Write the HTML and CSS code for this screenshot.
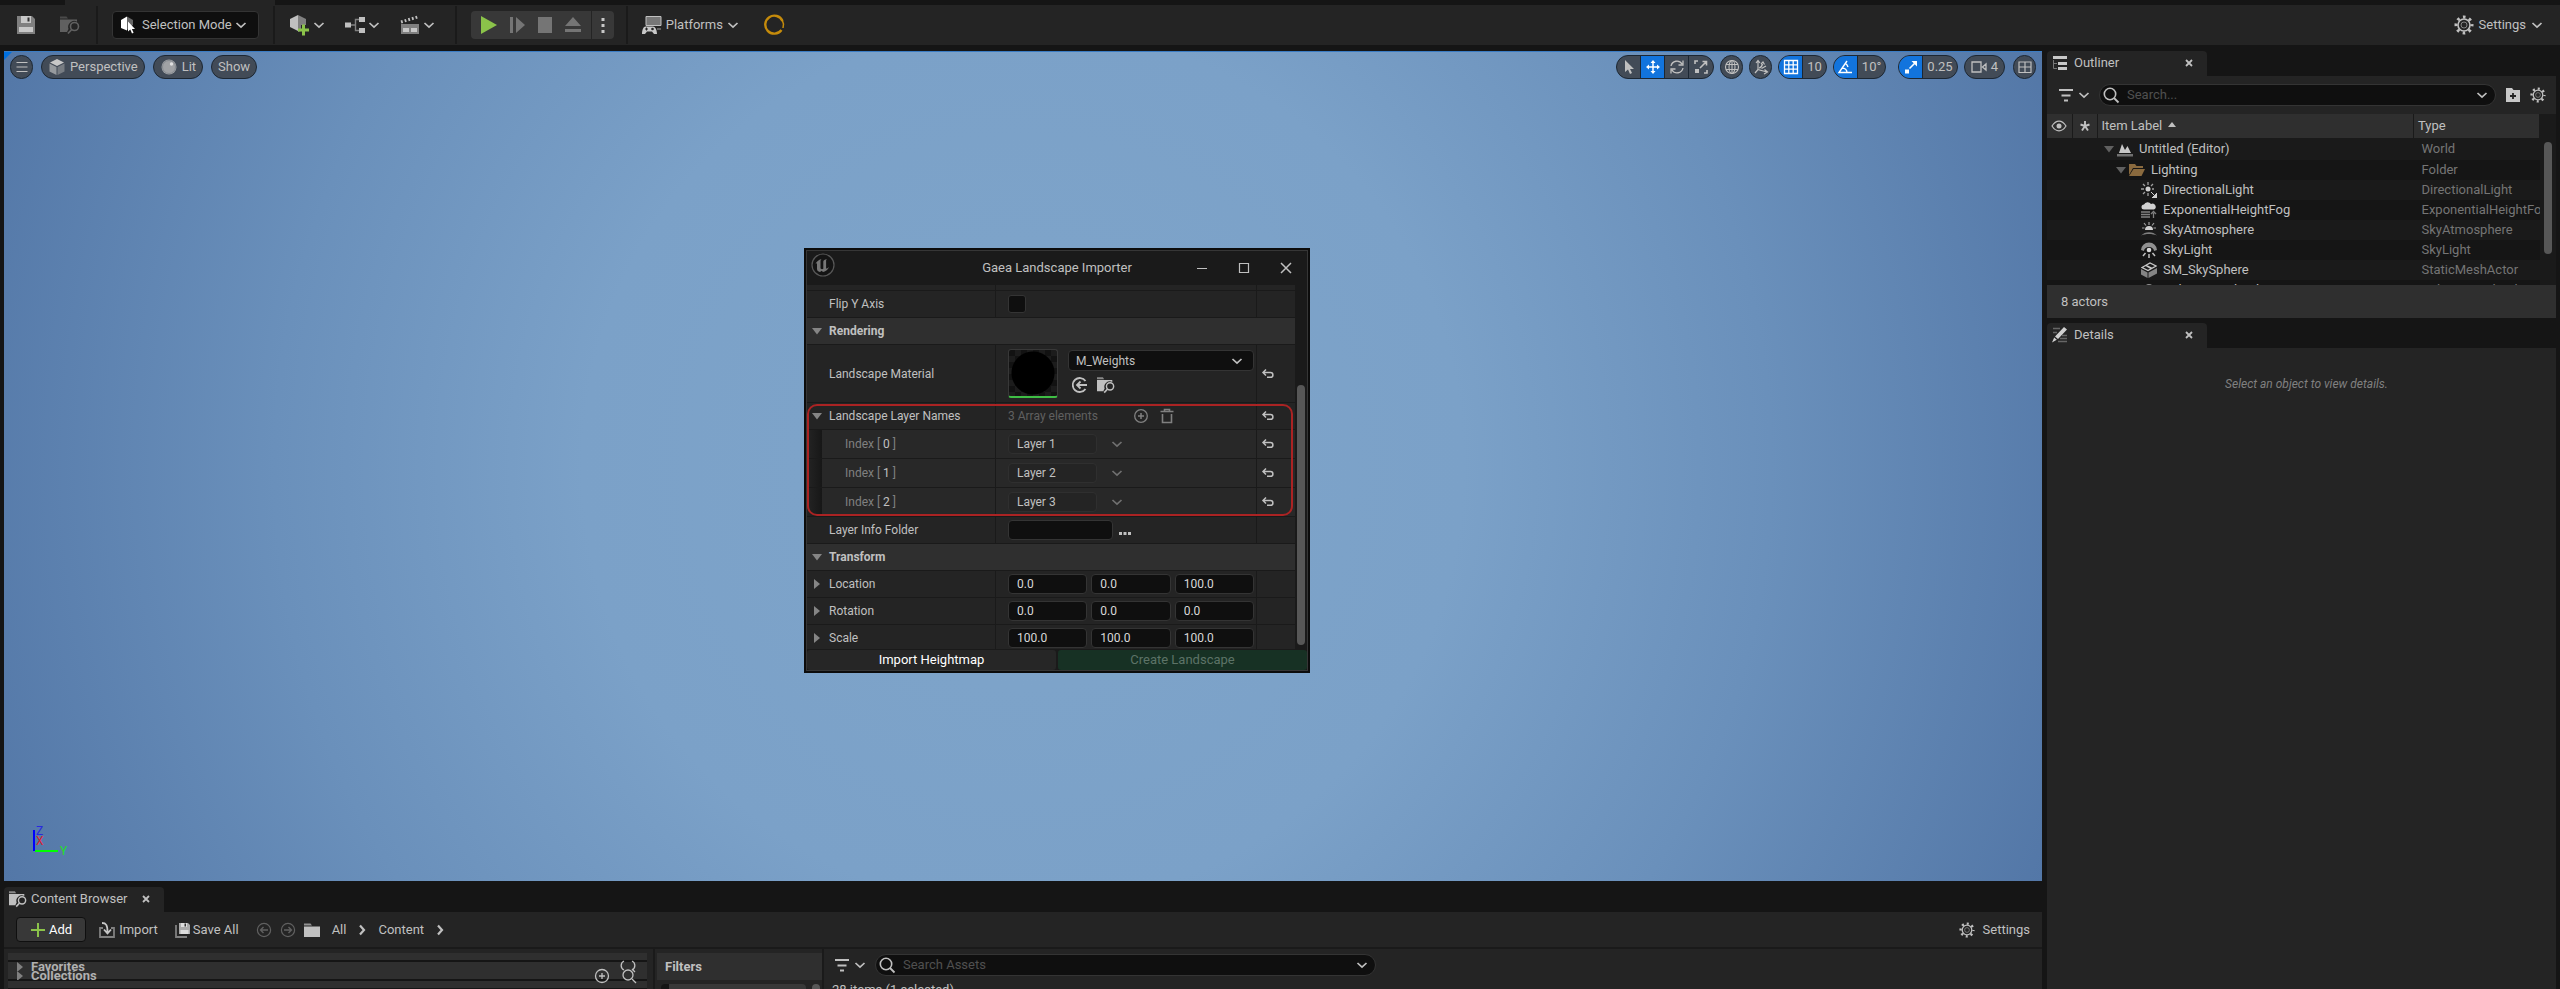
FILE: index.html
```html
<!DOCTYPE html>
<html lang="en">
<head>
<meta charset="utf-8">
<title>Unreal Editor</title>
<link rel="stylesheet" href="styles.css">
</head>
<body>
<svg class="defs" aria-hidden="true">
  <symbol id="chev" viewBox="0 0 12 12"><path d="M1.5 4l4.5 4.2L10.500 4" fill="none" stroke="currentColor" stroke-width="1.7"/></symbol>
  <symbol id="chevr" viewBox="0 0 12 12"><path d="M4 1.500l4 4.500-4 4.500" fill="none" stroke="currentColor" stroke-width="2.200"/></symbol>
  <symbol id="close" viewBox="0 0 12 12"><path d="M3 3l6 6M9 3l-6 6" stroke="currentColor" stroke-width="1.800"/></symbol>
  <symbol id="down" viewBox="0 0 12 12"><path d="M1 3h10L6 9.500z" fill="currentColor"/></symbol>
  <symbol id="right" viewBox="0 0 12 12"><path d="M3 1v10l6-5z" fill="currentColor"/></symbol>
  <symbol id="save" viewBox="0 0 20 20"><path d="M1 1h15l3 3v15H1z" fill="#808080"/><path d="M5 1h10v7H5zM3 12h14v5H3z" fill="#c8c8c8"/><path d="M11.500 2.500h2v4h-2z" fill="#333"/></symbol>
  <symbol id="foldersearch" viewBox="0 0 20 20"><path d="M0 1.500h6.500L8 3.500H0z" fill="currentColor" opacity=".65"/><path d="M0 4.500h17v2.200A6 6 0 0 0 8.500 14L7 17H0z" fill="currentColor"/><circle cx="14.500" cy="11.500" r="4" fill="none" stroke="currentColor" stroke-width="1.600"/><path d="M11.700 14.500L8 18.500" stroke="currentColor" stroke-width="1.800"/></symbol>
  <symbol id="folder" viewBox="0 0 20 20"><path d="M2 3.500h6.500L10 5.500H2z" fill="currentColor" opacity=".7"/><path d="M2 6.500h16V17H2z" fill="currentColor"/></symbol>
  <symbol id="modecube" viewBox="0 0 20 20"><path d="M3 5l6-3.500v14L3 13z" fill="#fff"/><path d="M9 1.500L15 5v5L9 15z" fill="#666"/><path d="M10 6.500v10l2.300-2 1.700 4 1.600-.8-1.700-3.700h3.100z" fill="#fff"/></symbol>
  <symbol id="addcube" viewBox="0 0 22 22"><path d="M2 5l8-4v16l-8-4z" fill="#c0c0c0"/><path d="M10 1l8 4v6h-5v6l-3 1z" fill="#808080"/><path d="M15.500 10.500v11M10 16h11" stroke="#8bc34a" stroke-width="3"/></symbol>
  <symbol id="nodes" viewBox="0 0 20 20"><path d="M4 10h6M15 4.500h-4.500v11H15" fill="none" stroke="#808080" stroke-width="1.400"/><path d="M0 7.500h6v5H0zM14 2h6v5h-6zM14 13h6v5h-6z" fill="#c0c0c0"/></symbol>
  <symbol id="clap" viewBox="0 0 20 20"><path d="M1 7L17.500 2" stroke="#c0c0c0" stroke-width="3" stroke-dasharray="1.800 2"/><path d="M1 9h18v10H1z" fill="#808080"/><path d="M3 13h6v4H3zM11 13h6v4h-6z" fill="#c8c8c8"/></symbol>
  <symbol id="platforms" viewBox="0 0 20 20"><path d="M4 1.500h15v9H4z" fill="#777" stroke="#c0c0c0"/><path d="M3.500 11.500h7.500c2 0 4 3 4 7.500h-3l-2-2.500H5L3 19H0c0-4 1.500-7.500 3.500-7.500z" fill="#c8c8c8"/><path d="M3 14h3M4.500 12.500v3" stroke="#242424"/><circle cx="10.500" cy="14" r="1.300" fill="#242424"/><path d="M15 14h4" stroke="#777" stroke-width="1.500"/></symbol>
  <symbol id="gear" viewBox="0 0 20 20"><circle cx="10" cy="10" r="8" fill="none" stroke="currentColor" stroke-width="3" stroke-dasharray="2.600 3.683" stroke-dashoffset="1.300"/><circle cx="10" cy="10" r="6" fill="none" stroke="currentColor" stroke-width="1.600"/><circle cx="10" cy="10" r="3" fill="none" stroke="currentColor" opacity=".6"/></symbol>
  <symbol id="search" viewBox="0 0 20 20"><circle cx="9" cy="9" r="5.700" fill="none" stroke="currentColor" stroke-width="1.600"/><path d="M13 13l4.500 4.500" stroke="currentColor" stroke-width="1.800"/></symbol>
  <symbol id="filter" viewBox="0 0 20 20"><path d="M3 5h14M5.500 10.500h9M8 15.500h4" stroke="currentColor" stroke-width="2"/></symbol>
  <symbol id="reset" viewBox="0 0 14 14"><path d="M5 2.500L2 5.500l3 3M2.500 5.500H9.500a2.400 2.400 0 0 1 0 4.800H6" fill="none" stroke="currentColor" stroke-width="1.500"/></symbol>
  <symbol id="pluscircle" viewBox="0 0 16 16"><circle cx="8" cy="8" r="6.300" fill="none" stroke="currentColor" stroke-width="1.300"/><path d="M8 5v6M5 8h6" stroke="currentColor" stroke-width="1.500"/></symbol>
  <symbol id="arrowcircle" viewBox="0 0 16 16"><circle cx="8" cy="8" r="6.600" fill="none" stroke="currentColor" stroke-width="1.200"/><path d="M12 8H4.500M7.500 5l-3 3 3 3" fill="none" stroke="currentColor" stroke-width="1.400"/></symbol>
</svg>

<div class="topstrip"><div class="topstrip-tab"></div></div>
<header class="toolbar">
  <button class="tb save" aria-label="Save"><svg class="i20"><use href="#save"/></svg></button>
  <button class="tb browse" aria-label="Browse"><svg class="i20"><use href="#foldersearch"/></svg></button>
  <i class="sep"></i>
  <button class="mode"><svg class="i20"><use href="#modecube"/></svg>Selection Mode<svg class="i12"><use href="#chev"/></svg></button>
  <i class="sep"></i>
  <div class="group">
    <button class="tb" aria-label="Add actor"><svg class="i22"><use href="#addcube"/></svg><svg class="i12"><use href="#chev"/></svg></button>
    <button class="tb" aria-label="Blueprints"><svg class="i20"><use href="#nodes"/></svg><svg class="i12"><use href="#chev"/></svg></button>
    <button class="tb" aria-label="Cinematics"><svg class="i20"><use href="#clap"/></svg><svg class="i12"><use href="#chev"/></svg></button>
  </div>
  <i class="sep"></i>
  <div class="play">
    <button class="tb" aria-label="Play"><svg class="i20"><path d="M2 1l16 9-16 9z" fill="#8bc34a"/></svg></button>
    <button class="tb" aria-label="Step"><svg class="i20"><path d="M3 2h3v16H3zM9 2l9 8-9 8z" fill="#757575"/></svg></button>
    <button class="tb" aria-label="Stop"><svg class="i20"><path d="M3 2h14v16H3z" fill="#757575"/></svg></button>
    <button class="tb" aria-label="Eject"><svg class="i20"><path d="M10 2l8 9H2zM2 14h16v3H2z" fill="#757575"/></svg></button>
    <button class="tb more" aria-label="Play options"><svg class="i20"><path d="M8.500 3h3v3h-3zM8.500 9h3v3h-3zM8.500 15h3v3h-3z" fill="#c8c8c8"/></svg></button>
  </div>
  <i class="sep"></i>
  <button class="tb platforms"><svg class="i20"><use href="#platforms"/></svg>Platforms<svg class="i12"><use href="#chev"/></svg></button>
  <svg class="i22 ring" viewBox="0 0 22 22"><path d="M19.500 7A9 9 0 1 0 18.500 16" fill="none" stroke="#c58b0b" stroke-width="2.400"/><path d="M19 5.500l1.500 4.500-.5 4" fill="none" stroke="#c58b0b" stroke-width="1.500"/></svg>
  <button class="tb settings"><svg class="i20"><use href="#gear"/></svg>Settings<svg class="i12"><use href="#chev"/></svg></button>
</header>

<div class="workspace">
  <div class="left">
    <main class="viewport">
      <div class="corner"></div>
      <div class="vbar">
        <button class="pill round" aria-label="Viewport options"><svg class="i14" viewBox="0 0 14 14"><path d="M1.500 2.500h11M1.500 7h11M1.500 11.500h11" stroke="currentColor" stroke-width="1.200"/></svg></button>
        <button class="pill text"><svg class="i18" viewBox="0 0 18 18"><path d="M9 1l7 3.500L9 8 2 4.500z" fill="#c8c8c8"/><path d="M1.500 5.500L8.500 9v8l-7-3.500z" fill="#969a9e"/><path d="M16.500 5.500L9.500 9v8l7-3.500z" fill="#777c82"/></svg>Perspective</button>
        <button class="pill text"><svg class="i18" viewBox="0 0 18 18"><circle cx="9" cy="9" r="7.500" fill="#a0a2a5"/><circle cx="9" cy="9" r="6.500" fill="none" stroke="#858a90"/><circle cx="11.500" cy="6" r="1.700" fill="#e0e0e0"/></svg>Lit</button>
        <button class="pill text">Show</button>
        <div class="pill multi first">
          <button aria-label="Select"><svg class="i16" viewBox="0 0 16 16"><path d="M4 1v12l3-2.500 2 4.500 2-1-2-4h4z" fill="currentColor"/></svg></button>
          <button class="on" aria-label="Move"><svg class="i16" viewBox="0 0 16 16"><path d="M8 2v12M2 8h12" stroke="currentColor" stroke-width="1.500"/><path d="M8 1l2.500 3h-5zM8 15l2.500-3h-5zM1 8l3-2.500v5zM15 8l-3-2.500v5z" fill="currentColor"/></svg></button>
          <button aria-label="Rotate"><svg class="i16" viewBox="0 0 16 16"><path d="M2 7a6 6 0 0 1 11-2M14 9a6 6 0 0 1-11 2M14 1.500V6H9.500M2 14.500V10h4.500" fill="none" stroke="currentColor" stroke-width="1.300"/></svg></button>
          <button aria-label="Scale"><svg class="i16" viewBox="0 0 16 16"><path d="M2 5V2h3M14 11v3h-3M7 9l6-6M9.500 2.500h4v4" fill="none" stroke="currentColor" stroke-width="1.600"/><path d="M2 10h4v4H2z" fill="currentColor"/></svg></button>
        </div>
        <button class="pill round" aria-label="World space"><svg class="i16" viewBox="0 0 16 16"><g fill="none" stroke="currentColor" stroke-width="1.100"><circle cx="8" cy="8" r="6.500"/><ellipse cx="8" cy="8" rx="3" ry="6.500"/><path d="M8 1.500v13M2 5.500h12M2 10.500h12"/></g></svg></button>
        <button class="pill round" aria-label="Surface snapping"><svg class="i16" viewBox="0 0 16 16"><path d="M5 2v8.500l9 2.500M3 4l2-2.500L7 4M5 10.500L2 14M11.500 10.500L14.500 13l-3.500 2M6 9c2-.5 3-2 3.500-4M8 5l2-2 1.500 2.500M8.500 9.500L13 7" fill="none" stroke="currentColor" stroke-width="1.200"/></svg></button>
        <div class="pill multi">
          <button class="on" aria-label="Grid snap"><svg class="i16" viewBox="0 0 16 16"><path d="M1.500 1.500h13v13h-13zM1.500 5.800h13M1.500 10.200h13M5.800 1.500v13M10.200 1.500v13" fill="none" stroke="currentColor" stroke-width="1.300"/></svg></button>
          <button class="val">10</button>
        </div>
        <div class="pill multi">
          <button class="on" aria-label="Angle snap"><svg class="i16" viewBox="0 0 16 16"><path d="M10 2L2 13.500h13M5 9c3 0 5 2 5 4.500M8.500 4.500c1.500 1 2 2 2.500 3.500" fill="none" stroke="currentColor" stroke-width="1.400"/></svg></button>
          <button class="val">10°</button>
        </div>
        <div class="pill multi apart">
          <button class="on" aria-label="Scale snap"><svg class="i16" viewBox="0 0 16 16"><path d="M6.500 9.500L12 4" stroke="currentColor" stroke-width="1.600"/><path d="M8.500 2H14v5.500zM2 10.500h4v4H2z" fill="currentColor"/></svg></button>
          <button class="val">0.25</button>
        </div>
        <button class="pill text cam"><svg class="i16" viewBox="0 0 16 16"><path d="M1 3h9v10H1zM11.500 8L15 5v6z" fill="none" stroke="currentColor" stroke-width="1.300"/></svg>4</button>
        <button class="pill round" aria-label="Layout"><svg class="i16" viewBox="0 0 16 16"><path d="M2 3h12v10.500H2zM8 3v10.500M2 8h12" fill="none" stroke="currentColor" stroke-width="1.200"/></svg></button>
      </div>

      <svg class="axes" viewBox="0 0 44 40"><path d="M2 9v21" stroke="#00f" stroke-width="2"/><path d="M3 30h23" stroke="#0f0" stroke-width="2"/><text x="4" y="14" fill="#2929e0">Z</text><text x="4" y="24" fill="#e01c30">X</text><text x="28" y="34" fill="#1fe01f">Y</text></svg>

      <section class="dialog" aria-label="Gaea Landscape Importer">
        <div class="titlebar">
          <svg class="i24" viewBox="0 0 24 24"><circle cx="12" cy="12" r="11" fill="#141414" stroke="#585858" stroke-width="1.200"/><path d="M4.500 11c1-2.500 3-4 6-5-1 1-1 1.500-1 3v6c0 1 1.500 1.500 2.800.8V8.500c0-1 1.500-2 3.700-2.500-.8.800-.9 1.300-.9 2v7.500c.9.200 2-.5 2.900-1.500-1 3-4 4.500-6 5l-1.300-1.300L9 19c-2-.5-3-1.500-3-3v-5c0-1-.7-.8-1.500 0z" fill="#777"/></svg>
          <h1>Gaea Landscape Importer</h1>
          <div class="winbtns">
            <button aria-label="Minimize"><svg class="i14" viewBox="0 0 14 14"><path d="M2 7.500h10" stroke="currentColor" stroke-width="1"/></svg></button>
            <button aria-label="Maximize"><svg class="i14" viewBox="0 0 14 14"><path d="M2.500 2.500h9v9h-9z" fill="none" stroke="currentColor" stroke-width="1.200"/></svg></button>
            <button aria-label="Close"><svg class="i14" viewBox="0 0 14 14"><path d="M2 2l10 10M12 2L2 12" stroke="currentColor" stroke-width="1.500"/></svg></button>
          </div>
        </div>
        <div class="body">
          <div class="props">
            <div class="row stub"><span class="name"></span><span class="value"></span><span class="end"></span></div>
            <div class="row"><label class="name" for="flip">Flip Y Axis</label><span class="value"><input type="checkbox" id="flip"></span><span class="end"></span></div>
            <h2 class="cat"><svg class="i12"><use href="#down"/></svg>Rendering</h2>
            <div class="row tall">
              <label class="name" for="mat">Landscape Material</label>
              <span class="value material"><span class="thumb"></span>
                <span class="asset">
                  <span class="pick"><select id="mat"><option>M_Weights</option></select><svg class="i12"><use href="#chev"/></svg></span>
                  <span class="assetbtns"><button aria-label="Use selected"><svg class="i16" viewBox="0 0 16 16"><path d="M13.500 4A7 7 0 1 0 13.500 12M15 8H5M8.500 4.500L5 8l3.500 3.500" fill="none" stroke="currentColor" stroke-width="1.800"/></svg></button><button aria-label="Browse to asset"><svg class="i18"><use href="#foldersearch"/></svg></button></span>
                </span></span>
              <span class="end"><button aria-label="Reset"><svg class="i14"><use href="#reset"/></svg></button></span>
            </div>
            <div class="layers">
              <div class="row"><span class="name"><svg class="i12 tri"><use href="#down"/></svg>Landscape Layer Names</span><span class="value array">3 Array elements<button class="addel" aria-label="Add element"><svg class="i16"><use href="#pluscircle"/></svg></button><button aria-label="Remove all"><svg class="i16" viewBox="0 0 16 16"><path d="M1.500 3.500h13M5.500 3V1.500h5V3M3.500 6v8.500h9V6" fill="none" stroke="currentColor" stroke-width="1.600"/></svg></button></span><span class="end"><button aria-label="Reset"><svg class="i14"><use href="#reset"/></svg></button></span></div>
              <div class="row index"><label class="name" for="l0">Index [ <b>0</b> ]</label><span class="value"><input class="field layer" id="l0" value="Layer 1"><svg class="i12"><use href="#chev"/></svg></span><span class="end"><button aria-label="Reset"><svg class="i14"><use href="#reset"/></svg></button></span></div>
              <div class="row index"><label class="name" for="l1">Index [ <b>1</b> ]</label><span class="value"><input class="field layer" id="l1" value="Layer 2"><svg class="i12"><use href="#chev"/></svg></span><span class="end"><button aria-label="Reset"><svg class="i14"><use href="#reset"/></svg></button></span></div>
              <div class="row index"><label class="name" for="l2">Index [ <b>2</b> ]</label><span class="value"><input class="field layer" id="l2" value="Layer 3"><svg class="i12"><use href="#chev"/></svg></span><span class="end"><button aria-label="Reset"><svg class="i14"><use href="#reset"/></svg></button></span></div>
            </div>
            <div class="row"><label class="name" for="info">Layer Info Folder</label><span class="value"><input class="field info" id="info"><button class="dots" aria-label="Choose folder"><svg class="i12" viewBox="0 0 12 12"><path d="M0 8h3v3H0zM4.500 8h3v3h-3zM9 8h3v3H9z" fill="currentColor"/></svg></button></span><span class="end"></span></div>
            <h2 class="cat"><svg class="i12"><use href="#down"/></svg>Transform</h2>
            <div class="row"><span class="name"><svg class="i12 tri"><use href="#right"/></svg>Location</span><span class="value vec"><input class="field" aria-label="Location X" value="0.0"><input class="field" aria-label="Location Y" value="0.0"><input class="field" aria-label="Location Z" value="100.0"></span><span class="end"></span></div>
            <div class="row"><span class="name"><svg class="i12 tri"><use href="#right"/></svg>Rotation</span><span class="value vec"><input class="field" aria-label="Rotation X" value="0.0"><input class="field" aria-label="Rotation Y" value="0.0"><input class="field" aria-label="Rotation Z" value="0.0"></span><span class="end"></span></div>
            <div class="row"><span class="name"><svg class="i12 tri"><use href="#right"/></svg>Scale</span><span class="value vec"><input class="field" aria-label="Scale X" value="100.0"><input class="field" aria-label="Scale Y" value="100.0"><input class="field" aria-label="Scale Z" value="100.0"></span><span class="end"></span></div>
          </div>
          <div class="track"><div class="thumbbar"></div></div>
        </div>
        <div class="actions"><button>Import Heightmap</button><button class="create" disabled>Create Landscape</button></div>
      </section>
    </main>

    <section class="browser">
      <div class="tab tight"><svg class="i18"><use href="#foldersearch"/></svg><span>Content Browser</span><button aria-label="Close tab"><svg class="i12"><use href="#close"/></svg></button></div>
      <div class="cbbar">
        <button class="add"><svg class="i14" viewBox="0 0 14 14"><path d="M7 0v14M0 7h14" stroke="#8bc34a" stroke-width="2"/></svg>Add</button>
        <button class="tb import"><svg class="i18" viewBox="0 0 18 18"><path d="M5 7H2v9h14V7h-3" fill="none" stroke="#808080" stroke-width="1.800"/><path d="M4 2c4 0 5.500 2 5.500 9M6 8.500l3.500 4 3.500-4" fill="none" stroke="#c8c8c8" stroke-width="1.800"/></svg>Import</button>
        <button class="tb saveall"><svg class="i16" viewBox="0 0 16 16"><path d="M1 3v12h11" fill="none" stroke="#808080" stroke-width="1.800"/><path d="M4 1h9l2 2v9H4z" fill="#aaa"/><path d="M6 1h6v4H6zM5.500 8h8v4h-8z" fill="#ddd"/><path d="M9.500 1.500h1.500v3H9.500z" fill="#333"/></svg>Save All</button>
        <button class="tb back" aria-label="Back"><svg class="i16"><use href="#arrowcircle"/></svg></button>
        <button class="tb fwd" aria-label="Forward"><svg class="i16"><use href="#arrowcircle"/></svg></button>
        <nav class="crumbs"><svg class="i20"><use href="#folder"/></svg><a href="#">All</a><svg class="i12"><use href="#chevr"/></svg><a href="#">Content</a><svg class="i12"><use href="#chevr"/></svg></nav>
        <button class="tb cbset"><svg class="i16"><use href="#gear"/></svg>Settings</button>
      </div>
      <div class="panes">
        <div class="sources">
          <div class="bar cap"></div>
          <div class="bar trees">
            <div class="tree"><svg class="i12"><use href="#right"/></svg><b>Favorites</b></div>
            <div class="tree"><svg class="i12"><use href="#right"/></svg><b>Collections</b></div>
          </div>
          <div class="bar cap"></div>
          <svg class="srcicons" viewBox="0 0 44 26"><g fill="none" stroke="#c0c0c0" stroke-width="1.300"><circle cx="9" cy="17" r="6.500"/><path d="M9 14v6M6 17h6"/><path d="M31 2a5 5 0 0 0 0 9M39 2a5 5 0 0 1 0 9M39 10l3 3"/><circle cx="35" cy="16" r="5"/><path d="M39 20l4 4"/></g></svg>
        </div>
        <div class="filters"><h2>Filters</h2><div class="filterbody"><span></span><i></i></div></div>
        <div class="assets">
          <div class="searchrow"><button class="tb" aria-label="Filter"><svg class="i20"><use href="#filter"/></svg><svg class="i12"><use href="#chev"/></svg></button>
            <div class="searchbox"><svg class="i20"><use href="#search"/></svg><input aria-label="Search Assets" placeholder="Search Assets"><svg class="i12"><use href="#chev"/></svg></div></div>
          <div class="count">28 items (1 selected)</div>
        </div>
      </div>
    </section>
  </div>

  <aside class="right">
    <section class="outliner">
      <div class="tab"><svg class="i16" viewBox="0 0 16 16"><path d="M1 1h14v3H1zM6 7h9v3H6zM6 12h9v3H6z" fill="#c8c8c8"/><path d="M1.500 5v8.500H5M1.500 8.500H5" fill="none" stroke="#777"/></svg><span>Outliner</span><button aria-label="Close tab"><svg class="i12"><use href="#close"/></svg></button></div>
      <div class="outbar"><button class="tb" aria-label="Filter"><svg class="i20"><use href="#filter"/></svg><svg class="i12"><use href="#chev"/></svg></button>
        <div class="searchbox"><svg class="i20"><use href="#search"/></svg><input aria-label="Search" placeholder="Search..."><svg class="i12"><use href="#chev"/></svg></div>
        <button class="tb" aria-label="New folder"><svg class="i16" viewBox="0 0 16 16"><path d="M1 1h6l1.500 2H15v12H1z" fill="#c8c8c8"/><path d="M8 6v6M5 9h6" stroke="#242424" stroke-width="1.800"/></svg></button>
        <button class="tb" aria-label="Outliner settings"><svg class="i16"><use href="#gear"/></svg></button></div>
      <div class="outscroll">
        <table>
          <colgroup><col class="c1"><col class="c1"><col><col class="c4"></colgroup>
          <thead><tr><th><svg class="i16" viewBox="0 0 16 16"><path d="M1 8c4-6.500 10-6.500 14 0-4 6.500-10 6.500-14 0z" fill="none" stroke="#c0c0c0" stroke-width="1.200"/><circle cx="8" cy="8" r="2.500" fill="#c0c0c0"/></svg></th><th><svg class="i12" viewBox="0 0 12 12"><path d="M6 1v5M6 6L1.500 4.500M6 6l4.500-1.500M6 6l-3 4.500M6 6l3 4.500" stroke="#c0c0c0" stroke-width="1.900"/></svg></th><th class="lab">Item Label<svg class="i12" viewBox="0 0 12 12"><path d="M2 9h8L6 4z" fill="#c0c0c0"/></svg></th><th class="lab">Type</th></tr></thead>
          <tbody>
            <tr class="root"><td></td><td></td><td><span class="item"><svg class="i12 dim"><use href="#down"/></svg><svg class="i16" viewBox="0 0 16 16"><path d="M2 12l3-9 3 6 2.500-4L14 12z" fill="#c8c8c8"/><path d="M0 13h16v2.500H0z" fill="#707070"/></svg>Untitled (Editor)</span></td><td>World</td></tr>
            <tr><td></td><td></td><td><span class="item d1"><svg class="i12 dim"><use href="#down"/></svg><svg class="i16" viewBox="0 0 16 16"><path d="M0 2h6l1.500 2H14v2H4L0 13z" fill="#8a6a3e"/><path d="M4.500 7H16l-3.500 7H0z" fill="#8a6a3e"/></svg>Lighting</span></td><td>Folder</td></tr>
            <tr><td></td><td></td><td><span class="item d2"><svg class="i16" viewBox="0 0 16 16"><circle cx="7" cy="7" r="2.500" fill="#d0d0d0"/><path d="M7 0v3M7 11v3M0 7h3M11 7h2M2 2l2 2M12 2l-2 2M2 12l2-2" stroke="#a0a0a0" stroke-width="1.300"/><path d="M10 10l3 3M16 11v5h-5z" fill="#d0d0d0" stroke="#d0d0d0"/></svg>DirectionalLight</span></td><td>DirectionalLight</td></tr>
            <tr><td></td><td></td><td><span class="item d2"><svg class="i16" viewBox="0 0 16 16"><path d="M3 7.500a2.500 2.500 0 0 1 0-5 4 4 0 0 1 7-.5 2.800 2.800 0 0 1 3 5.500z" fill="#d0d0d0"/><path d="M0 10h9M0 12.500h9M0 15h9M12.500 16v-5M10 12l2.500-2.500L15 12" fill="none" stroke="#808080" stroke-width="1.300"/></svg>ExponentialHeightFog</span></td><td>ExponentialHeightFog</td></tr>
            <tr><td></td><td></td><td><span class="item d2"><svg class="i16" viewBox="0 0 16 16"><path d="M4 8a4 4 0 0 1 8 0z" fill="#d0d0d0"/><path d="M8 0v3M3 1l2 2.500M13 1l-2 2.500M1 6h2.500M12.500 6H15" stroke="#a0a0a0" stroke-width="1.200"/><path d="M0 13.500c4-4.500 12-4.500 16 0-5-2-11-2-16 0z" fill="#808080"/></svg>SkyAtmosphere</span></td><td>SkyAtmosphere</td></tr>
            <tr><td></td><td></td><td><span class="item d2"><svg class="i16" viewBox="0 0 16 16"><path d="M0 8a8 7.500 0 0 1 16 0l-3 1a5 4 0 0 0-10 0z" fill="#909090"/><circle cx="8" cy="8" r="2.300" fill="#d8d8d8"/><path d="M8 12v4M4.500 11l-2.500 3M11.500 11l2.500 3" stroke="#c0c0c0" stroke-width="1.500"/></svg>SkyLight</span></td><td>SkyLight</td></tr>
            <tr><td></td><td></td><td><span class="item d2"><svg class="i16" viewBox="0 0 16 16"><path d="M1 5.500L9 1l6 3-8 4.500zM5 3.300l6 3M9 5.800L5.500 4" fill="none" stroke="#c8c8c8" stroke-width="1.300"/><path d="M0 7l6.500 3.500V16L0 12.500zM7.500 10.500L16 6v5.500L7.500 16z" fill="#858585"/></svg>SM_SkySphere</span></td><td>StaticMeshActor</td></tr>
            <tr><td></td><td></td><td><span class="item d2"><svg class="i16" viewBox="0 0 16 16"><path d="M3 7a5 5 0 0 1 10 0v4H3z" fill="#909090"/></svg>VolumetricCloud</span></td><td>VolumetricCloud</td></tr>
          </tbody>
        </table>
        <div class="track"><div class="thumbbar"></div></div>
      </div>
      <div class="status">8 actors</div>
    </section>
    <section class="details">
      <div class="tab"><svg class="i16" viewBox="0 0 16 16"><path d="M1 1.500h7M1 5.500h4M10 8.500h5M8 11.500h7M6 14.500h9" stroke="#666" stroke-width="1.300"/><path d="M12 0l3 2.500L6 12l-3-2.500zM2.200 10.500l2.600 2.300L0 15.500z" fill="#d0d0d0"/></svg><span>Details</span><button aria-label="Close tab"><svg class="i12"><use href="#close"/></svg></button></div>
      <div class="detailbody">Select an object to view details.</div>
    </section>
  </aside>
</div>
</body>
</html>
```
FILE: styles.css
```css
* { box-sizing: border-box; }
html, body { height: 100%; }
body {
  margin: 0; background: #151515; color: #c0c0c0;
  font: 13px/16px Roboto, "Liberation Sans", sans-serif;
  display: flex; flex-direction: column; overflow: hidden;
}
button, input, select { font: inherit; color: inherit; background: none; border: 0; padding: 0; margin: 0; border-radius: 0; }
button { display: flex; align-items: center; }
svg { display: block; flex: none; }
h1, h2 { margin: 0; font-size: 13px; }
a { color: inherit; text-decoration: none; }
.defs { position: absolute; width: 0; height: 0; }
.i12 { width: 12px; height: 12px; }
.i14 { width: 14px; height: 14px; }
.i16 { width: 16px; height: 16px; }
.i18 { width: 18px; height: 18px; }
.i20 { width: 20px; height: 20px; }
.i22 { width: 22px; height: 22px; }
.i24 { width: 24px; height: 24px; }

.topstrip { height: 5px; padding-left: 65px; }
.topstrip-tab { width: 210px; height: 5px; background: #242424; }
.toolbar { height: 40px; flex: none; background: #242424; display: flex; align-items: center; padding: 0 17px 0 16px; }
.sep { width: 2px; height: 38px; background: #1a1a1a; flex: none; }
.browse { margin: 0 16px 0 24px; color: #606060; }
.mode { height: 28px; margin: 0 14px; padding: 0 11px 0 5px; background: #0f0f0f; border: 1px solid #343434; border-radius: 4px; }
.mode .i20 { margin-right: 4px; }
.mode .i12 { margin-left: 3px; }
.group { display: flex; gap: 20px; margin: 0 20px 0 13px; }
.group .tb { gap: 3px; }
.play { height: 28px; display: flex; margin: 0 12px 0 14px; padding-left: 8px; gap: 8px; background: #383838; border-radius: 4px; }
.play .more { width: 23px; border-left: 1px solid #242424; justify-content: center; }
.platforms { margin-left: 14px; gap: 4px; }
.ring { margin-left: 24px; }
.settings { margin-left: auto; gap: 5px; }

.workspace { flex: 1; min-height: 0; display: flex; gap: 5px; padding: 6px 4px 0; }
.left { flex: 1; min-width: 0; display: flex; flex-direction: column; gap: 6px; }
.right { width: 509px; flex: none; display: flex; flex-direction: column; gap: 5px; }

.viewport { flex: 1; position: relative; border-top: 1px solid #3a7cc4; background: radial-gradient(circle farthest-corner at 50% 50%, #7fa5ca 0%, #7ba1c8 40%, #6a90bb 68%, #5377a7 100%); }
.corner { position: absolute; left: 0; top: 0; border-top: 8px solid #0070e0; border-right: 8px solid transparent; }
.vbar { display: flex; padding: 3px 6px 0; gap: 6px; font-size: 13px; }
.pill { height: 24px; border: 1px solid #1c2733; border-radius: 12px; background: #424b57; overflow: hidden; justify-content: center; display: flex; align-items: center; flex: none; }
.round { width: 23px; }
.text { padding: 0 6px; gap: 4px; margin-left: 2px; }
.multi button { width: 24px; height: 22px; justify-content: center; border-right: 1px solid #1c2733; }
.multi button:last-child { border-right: 0; }
.multi .on { background: #1274dd; color: #fff; }
.multi .val { width: auto; padding: 0 4px; }
.first { margin-left: auto; }
.apart { margin-left: 6px; }
.cam { margin: 0 2px 0 0; }
.axes { position: absolute; left: 28px; bottom: 20px; width: 44px; height: 40px; font: 12px Roboto, sans-serif; }

.dialog { position: absolute; left: 800px; top: 196px; width: 506px; background: #1a1a1a; border: 2px solid #0c0c0c; outline: 1px solid #363636; outline-offset: -3px; font-size: 12px; padding: 1px; }
.titlebar { height: 34px; display: grid; grid-template-columns: 1fr auto 1fr; align-items: center; padding: 0 14px 0 4px; }
.titlebar h1 { font-weight: 400; font-size: 13px; padding-left: 10px; }
.titlebar .i24 { align-self: start; margin-top: 2px; }
.winbtns { display: flex; justify-content: flex-end; gap: 28px; }
.body { display: flex; height: 364px; overflow: hidden; }
.props { flex: 1; min-width: 0; }
.row { display: grid; grid-template-columns: 188px 1fr 38px; min-height: 27px; border-bottom: 1px solid #1a1a1a; background: #242424; }
.stub { min-height: 6px; }
.row > * { display: flex; align-items: center; }
.name { padding-left: 22px; position: relative; }
.tri { position: absolute; left: 4px; color: #858585; }
.value { border: solid #1a1a1a; border-width: 0 1px; padding-left: 12px; }
.end { padding-left: 4px; }
.cat { height: 27px; display: flex; align-items: center; gap: 6px; padding-left: 4px; background: #2f2f2f; border-bottom: 1px solid #1a1a1a; font-size: 12px; }
.cat svg { color: #858585; }
.tall { min-height: 58px; }
input[type=checkbox] { appearance: none; width: 18px; height: 18px; background: #0f0f0f; border: 1px solid #343434; border-radius: 3px; }
.material { gap: 10px; }
.thumb { width: 50px; height: 49px; border: 1px solid #383838; border-bottom: 2px solid #3fbf45; border-radius: 3px; background: radial-gradient(circle at center, #000 21px, transparent 22px), repeating-conic-gradient(#1c1c1c 0 25%, #121212 0 50%) 0 0 / 12px 12px; }
.asset { flex: 1; padding: 0 2px 3px 0; }
.pick { display: flex; align-items: center; height: 21px; background: #0f0f0f; border: 1px solid #343434; border-radius: 4px; padding: 0 10px 0 7px; }
.pick select { flex: 1; appearance: none; }
.assetbtns { display: flex; gap: 9px; padding: 5px 0 0 4px; align-items: center; }
.layers { position: relative; }
.layers::after { content: ""; position: absolute; inset: 1px 2px 1px 0; border: 2px solid #ab2323; border-radius: 10px; pointer-events: none; }
.array { color: #606060; }
.array button { color: #808080; margin-left: 10px; }
.array .addel { margin-left: 35px; }
.index { min-height: 29px; background: linear-gradient(90deg, #242424 0, #171717 15px, #282828 15px); }
.index .name { padding-left: 38px; color: #808080; white-space: pre; }
.index b { font-weight: 400; color: #c0c0c0; }
.index .value svg { color: #707070; margin-left: 14px; }
.field { height: 20px; min-width: 0; background: #0f0f0f; border: 1px solid #343434; border-radius: 4px; padding: 0 8px; color: #d8d8d8; }
.layer { width: 89px; background: #242424; border-color: #2f2f2f; color: #c0c0c0; }
.info { width: 105px; }
.dots { margin-left: 6px; }
.row .vec { display: grid; grid-template-columns: repeat(3, 1fr); gap: 4px; padding-right: 2px; }
.track { width: 12px; flex: none; padding: 100px 2px 4px; }
.thumbbar { width: 8px; height: 100%; margin: 0 auto; background: #575757; border-radius: 4px; }
.actions { display: grid; grid-template-columns: 1fr 1fr; gap: 2px; padding-top: 1px; }
.actions button { height: 20px; justify-content: center; background: #262626; border-radius: 3px; color: #fff; font-size: 13px; }
.actions .create { background: #173124; color: #5d7367; }

.tab { width: 160px; height: 25px; display: flex; align-items: center; background: #242424; border-radius: 4px 4px 0 0; padding: 0 12px 2px 5px; gap: 6px; }
.tab span { flex: 1; }
.tight { gap: 4px; }

.browser { flex: none; height: 102px; display: flex; flex-direction: column; overflow: hidden; }
.cbbar { height: 37px; flex: none; display: flex; align-items: center; background: #242424; border-bottom: 2px solid #1a1a1a; padding: 0 12px; }
.add { height: 25px; padding: 0 13px 0 14px; gap: 4px; background: #383838; border: 1px solid #0f0f0f; border-radius: 4px; color: #fff; }
.import { margin-left: 12px; gap: 3px; }
.saveall { margin-left: 17px; gap: 2px; }
.back { margin-left: 17px; color: #606060; }
.fwd { margin-left: 8px; color: #606060; transform: scaleX(-1); }
.crumbs { display: flex; align-items: center; gap: 10px; margin-left: 6px; }
.cbset { margin-left: auto; gap: 8px; }
.panes { flex: 1; min-height: 0; display: flex; background: #242424; }
.sources { position: relative; width: 651px; padding: 4px 6px 0 4px; border-right: 2px solid #1a1a1a; flex: none; background: #242424; }
.bar { background: #2f2f2f; border-bottom: 2px solid #151515; }
.cap { height: 9px; }
.trees { height: 19px; }
.tree { height: 9px; line-height: 11px; overflow: hidden; display: flex; align-items: center; gap: 5px; padding-left: 6px; color: #b0b0b0; }
.tree svg { color: #808080; }
.srcicons { position: absolute; right: 16px; top: 10px; width: 44px; height: 26px; }
.filters { width: 169px; flex: none; border-right: 2px solid #1a1a1a; padding: 4px 0 0 2px; }
.filters h2 { background: #2f2f2f; height: 27px; line-height: 27px; padding-left: 8px; }
.filterbody { display: flex; gap: 6px; padding: 4px 2px 0 4px; }
.filterbody span { flex: 1; height: 12px; background: #383838; border-left: 8px solid #151515; border-radius: 4px; }
.filterbody i { width: 8px; height: 12px; border-radius: 4px; background: #575757; }
.assets { flex: 1; padding: 5px 8px 0; }
.searchrow { display: flex; align-items: center; gap: 9px; }
.searchbox { display: flex; align-items: center; gap: 6px; height: 22px; background: #0f0f0f; border: 1px solid #343434; border-radius: 11px; padding: 0 7px 0 1px; }
.searchbox input { flex: 1; min-width: 0; }
input::placeholder { color: #505050; opacity: 1; }
.assets .searchbox { width: 501px; }
.searchrow .tb, .outbar .tb { gap: 2px; }
.count { padding-top: 6px; }

.outbar { height: 38px; display: flex; align-items: center; gap: 9px; background: #242424; padding: 0 10px 0 9px; }
.outbar .searchbox { flex: 1; }
.outscroll { display: flex; height: 171px; overflow: hidden; background: #1a1a1a; }
table { flex: 1; width: 100%; align-self: flex-start; min-width: 0; table-layout: fixed; border-collapse: collapse; }
.c1 { width: 25px; }
.c4 { width: 126px; }
th { height: 24px; padding: 0; background: #2f2f2f; border-right: 1px solid #1a1a1a; font-weight: 400; text-align: left; }
th svg { margin: 0 auto; }
.lab { padding-left: 4px; }
.lab svg { display: inline-block; margin-left: 4px; }
td { height: 20px; padding: 0; white-space: nowrap; overflow: hidden; }
td:last-child { padding-left: 8px; color: #757575; }
tbody tr:nth-child(odd) { background: #1a1a1a; }
tbody tr:nth-child(even) { background: #151515; }
.root td { height: 22px; }
.item { display: flex; align-items: center; gap: 6px; padding-left: 6px; }
.item .dim { color: #606060; margin-right: -4px; }
.d1 { padding-left: 18px; }
.d2 { padding-left: 44px; }
.outscroll .track { width: 16px; padding: 28px 0 0; }
.outscroll .thumbbar { height: 112px; }
.status { height: 33px; line-height: 33px; padding-left: 14px; background: #2f2f2f; }
.details { flex: 1; display: flex; flex-direction: column; }
.detailbody { flex: 1; background: #242424; padding: 28px 0 0 10px; text-align: center; font-style: italic; font-size: 12px; color: #808080; }
```
